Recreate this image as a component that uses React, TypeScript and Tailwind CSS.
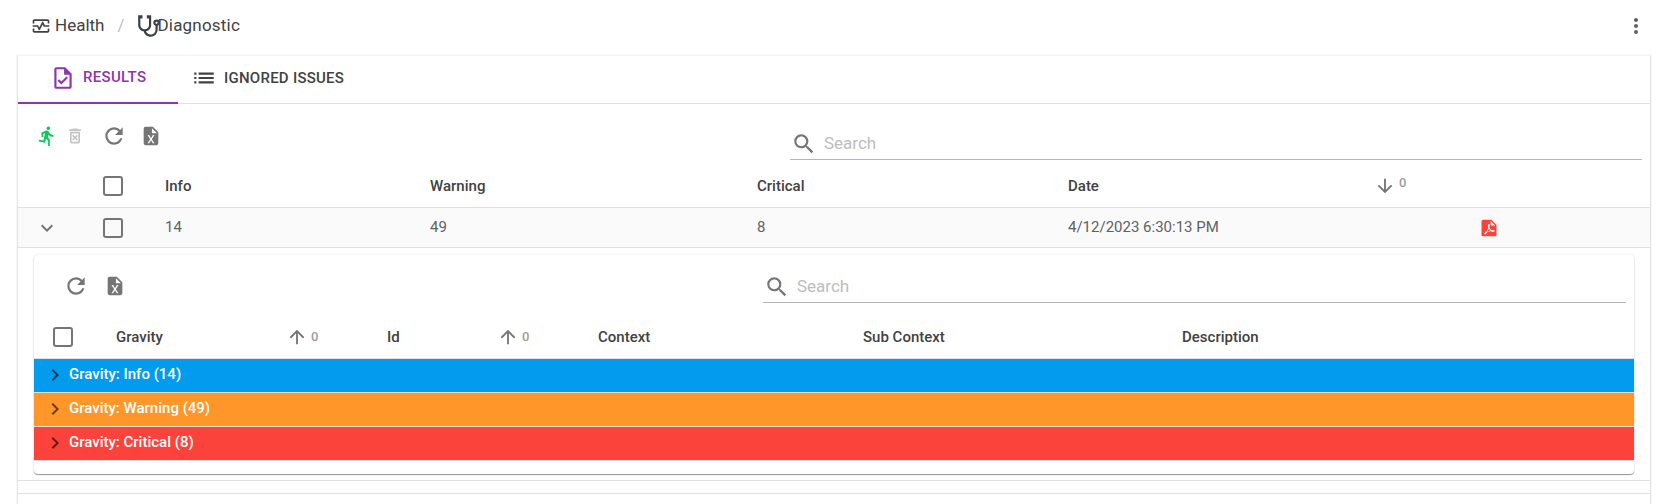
import React from "react";
import { MdOutlineMonitorHeart, MdMoreVert, MdList, MdKeyboardArrowDown, MdKeyboardArrowRight } from "react-icons/md";

const paths = {
    run: "M13.5,5.5C14.59,5.5 15.5,4.58 15.5,3.5C15.5,2.38 14.59,1.5 13.5,1.5C12.39,1.5 11.5,2.38 11.5,3.5C11.5,4.58 12.39,5.5 13.5,5.5M9.89,19.38L10.89,15L13,17V23H15V15.5L12.89,13.5L13.5,10.5C14.79,12 16.79,13 19,13V11C17.09,11 15.5,10 14.69,8.58L13.69,7C13.29,6.38 12.69,6 12,6C11.69,6 11.5,6.08 11.19,6.08L6,8.28V13H8V9.58L9.79,8.88L8.19,17L3.29,16L2.89,18L9.89,19.38Z",
    trash: "M14.12,10.47L12,12.59L9.87,10.47L8.46,11.88L10.59,14L8.47,16.12L9.88,17.54L12,15.41L14.12,17.53L15.53,16.12L13.41,14L15.53,11.88L14.12,10.47M15.5,4L14.5,3H9.5L8.5,4H5V6H19V4H15.5M6,19A2,2 0 0,0 8,21H16A2,2 0 0,0 18,19V7H6V19M8,9H16V19H8V9Z",
    refresh: "M17.65,6.35C16.2,4.9 14.21,4 12,4A8,8 0 0,0 4,12A8,8 0 0,0 12,20C15.73,20 18.84,17.45 19.73,14H17.65C16.83,16.33 14.61,18 12,18A6,6 0 0,1 6,12A6,6 0 0,1 12,6C13.66,6 15.14,6.69 16.22,7.78L13,11H20V4L17.65,6.35Z",
    excel: "M14,2H6A2,2 0 0,0 4,4V20A2,2 0 0,0 6,22H18A2,2 0 0,0 20,20V8L14,2M15.8,20H14L12,16.6L10,20H8.2L11.1,15.5L8.2,11H10L12,14.4L14,11H15.8L12.9,15.5L15.8,20M13,9V3.5L18.5,9H13Z",
    pdf: "M14,9H19.5L14,3.5V9M7,2H15L21,8V20A2,2 0 0,1 19,22H5C3.89,22 3,21.1 3,20V4A2,2 0 0,1 5,2H7M11.93,12.44C12.34,13.34 12.86,14.08 13.46,14.59L13.87,14.91C13,15.07 11.8,15.35 10.53,15.84L10.42,15.88L10.92,14.84C11.37,13.97 11.7,13.18 11.93,12.44M18.41,16.25C18.59,16.07 18.68,15.84 18.69,15.59C18.72,15.39 18.67,15.2 18.57,15.04C18.28,14.57 17.53,14.35 16.29,14.35L15,14.42L14.13,13.84C13.5,13.32 12.93,12.41 12.53,11.28L12.57,11.14C12.9,9.81 13.21,8.2 12.55,7.54C12.39,7.38 12.17,7.3 11.94,7.3H11.7C11.33,7.3 11,7.69 10.91,8.07C10.54,9.4 10.76,10.13 11.13,11.34C10.88,12.23 10.56,13.25 10.05,14.28L9.09,16.08L8.2,16.57C7,17.32 6.43,18.16 6.32,18.69C6.28,18.88 6.3,19.05 6.37,19.23L6.4,19.28L6.88,19.59L7.32,19.7C8.13,19.7 9.05,18.75 10.29,16.63L10.47,16.56C11.5,16.23 12.78,16 14.5,15.81C15.53,16.32 16.74,16.55 17.5,16.55C17.94,16.55 18.24,16.44 18.41,16.25Z",
    stethoscope: "M19,8C19.56,8 20,8.43 20,9A1,1 0 0,1 19,10C18.43,10 18,9.55 18,9C18,8.43 18.43,8 19,8M2,2V11C2,13.96 4.19,16.5 7.14,16.91C7.76,19.92 10.42,22 13.5,22A6.5,6.5 0 0,0 20,15.5V11.81C21.16,11.39 22,10.29 22,9A3,3 0 0,0 19,6A3,3 0 0,0 16,9C16,10.29 16.84,11.4 18,11.81V15.41C18,17.91 16,19.91 13.5,19.91C11.5,19.91 9.82,18.7 9.22,16.9C12,16.3 14,13.8 14,11V2H10V5H12V11A4,4 0 0,1 8,15A4,4 0 0,1 4,11V5H6V2H2Z",
    fileCheck: "M14,2H6A2,2 0 0,0 4,4V20A2,2 0 0,0 6,22H18A2,2 0 0,0 20,20V8L14,2M18,20H6V4H13V9H18V20M10.5,18L7,14.5L8.41,13.09L10.5,15.17L15.09,10.59L16.5,12L10.5,18Z",
    magnify: "M9.5,3A6.5,6.5 0 0,1 16,9.5C16,11.11 15.41,12.59 14.44,13.73L14.71,14H15.5L20.5,19L19,20.5L14,15.5V14.71L13.73,14.44C12.59,15.41 11.11,16 9.5,16A6.5,6.5 0 0,1 3,9.5A6.5,6.5 0 0,1 9.5,3M9.5,5C7,5 5,7 5,9.5C5,12 7,14 9.5,14C12,14 14,12 14,9.5C14,7 12,5 9.5,5Z",
    arrowUp: "M13,20H11V8L5.5,13.5L4.08,12.08L12,4.16L19.92,12.08L18.5,13.5L13,8V20Z",
    arrowDown: "M11,4H13V16L18.5,10.5L19.92,11.92L12,19.84L4.08,11.92L5.5,10.5L11,16V4Z",
};

const Icon = ({ d, className }: { d: string; className: string }) => (
    <svg viewBox="0 0 24 24" fill="currentColor" className={className}>
        <path d={d} />
    </svg>
);

const Check = () => <div className="w-[20px] h-[20px] border-2 border-[#757575] rounded-[3px]" />;

const Search = ({ className }: { className: string }) => (
    <div className={`flex items-center border-b border-[#b5b5b5] ${className}`}>
        <Icon d={paths.magnify} className="w-[26px] h-[26px] text-[#757575] ml-[1px]" />
        <input
            placeholder="Search"
            className="ml-[7px] flex-1 text-[17px] outline-none placeholder:text-[#bdbdbd]"
        />
    </div>
);

const Sort = ({ d, className }: { d: string; className: string }) => (
    <div className={`flex -ml-[2px] ${className}`}>
        <Icon d={d} className="w-[22px] h-[22px] text-[#757575]" />
        <span className="ml-[3px] text-[13px] leading-[14px] text-[#9e9e9e]">0</span>
    </div>
);

const groups = [
    { label: "Gravity: Info (14)", color: "bg-[#039BEE]" },
    { label: "Gravity: Warning (49)", color: "bg-[#FF962A]" },
    { label: "Gravity: Critical (8)", color: "bg-[#FB433B]" },
];

export default function App() {
    return (
        <div className="h-[504px] overflow-hidden bg-white font-['Roboto',sans-serif] text-[15px] text-[#616161]">
            {/* Шапка */}
            <div className="h-[55px] pb-[3px] pl-[31px] pr-[23px] flex items-center text-[17px] text-[#424242]">
                <MdOutlineMonitorHeart className="w-[20px] h-[20px] text-[#424242]" />
                <span className="ml-[4px]">Health</span>
                <span className="ml-[13px] text-[#bdbdbd]">/</span>
                <Icon d={paths.stethoscope} className="ml-[12px] w-[26px] h-[26px] text-[#37404a]" />
                <span className="-ml-[5px] tracking-[0.2px]">Diagnostic</span>
                <MdMoreVert className="ml-auto w-[24px] h-[24px] text-[#616161]" />
            </div>

            <div className="ml-[17px] mr-[20px] h-[449px] border-x border-[#e3e3e3] border-t border-t-[#f5f5f5] shadow-[0_0_2px_rgba(0,0,0,0.08)]">
                {/* Вкладки */}
                <div className="h-[48px] flex border-b border-[#e0e0e0] font-medium">
                    <div className="w-[160px] h-[48px] flex items-center pl-[33px] pb-[3px] border-b-2 border-[#8e35ab] text-[#8e35ab]">
                        <Icon d={paths.fileCheck} className="w-[26px] h-[26px] -ml-[1px]" />
                        <span className="ml-[7px] tracking-[0.3px]">RESULTS</span>
                    </div>
                    <div className="flex items-center pl-[13px] pb-[3px] text-[#424242] tracking-[0.25px]">
                        <MdList className="w-[26px] h-[26px]" />
                        <span className="ml-[7px]">IGNORED ISSUES</span>
                    </div>
                </div>

                {/* Панель инструментов */}
                <div className="h-[58px] flex items-start relative">
                    <div className="flex items-center h-[24px] mt-[20px] pl-[18px]">
                        <Icon d={paths.run} className="w-[22px] h-[22px] text-[#14c45f]" />
                        <Icon d={paths.trash} className="ml-[7px] w-[20px] h-[20px] text-[#c4c4c4]" />
                        <Icon d={paths.refresh} className="ml-[16px] w-[26px] h-[26px] text-[#757575]" />
                        <Icon d={paths.excel} className="ml-[13px] w-[22px] h-[22px] text-[#757575]" />
                    </div>
                    <Search className="absolute left-[772px] right-[8px] top-[26px] h-[30px] pb-[2px]" />
                </div>

                {/* Таблица */}
                <div className="h-[46px] pt-[3px] grid grid-cols-[147px_265px_327px_311px_308px_1fr] items-center border-b border-[#e0e0e0] font-medium text-[#424242]">
                    <div className="pl-[85px]"><Check /></div>
                    <div>Info</div>
                    <div>Warning</div>
                    <div>Critical</div>
                    <div>Date</div>
                    <Sort d={paths.arrowDown} className="items-start [&>span]:mt-[1px]" />
                </div>
                <div className="h-[40px] grid grid-cols-[147px_265px_327px_311px_414px_1fr] items-center border-b border-[#e0e0e0] bg-[#fafafa]">
                    <div className="flex items-center pl-[17px]">
                        <MdKeyboardArrowDown className="w-[24px] h-[24px] text-[#757575]" />
                        <div className="ml-[44px]"><Check /></div>
                    </div>
                    <div>14</div>
                    <div>49</div>
                    <div>8</div>
                    <div>4/12/2023 6:30:13 PM</div>
                    <Icon d={paths.pdf} className="w-[20px] h-[20px] text-[#fb433b] -ml-[3px]" />
                </div>

                {/* Вложенная таблица */}
                <div className="mt-[7px] ml-[16px] mr-[16px] h-[219px] rounded-[4px] bg-white shadow-[0_1px_1px_rgba(0,0,0,0.4),0_0_3px_rgba(0,0,0,0.1)]">
                    <div className="h-[58px] relative">
                        <div className="flex items-center pl-[29px] pt-[18px]">
                            <Icon d={paths.refresh} className="w-[26px] h-[26px] text-[#757575]" />
                            <Icon d={paths.excel} className="ml-[15px] w-[22px] h-[22px] text-[#757575]" />
                        </div>
                        <Search className="absolute left-[729px] right-[8px] top-[16px] h-[32px] pt-[1px]" />
                    </div>
                    <div className="h-[45px] pt-[3px] grid grid-cols-[82px_172px_99px_112px_99px_265px_319px_1fr] items-center font-medium text-[#424242]">
                        <div className="pl-[19px]"><Check /></div>
                        <div>Gravity</div>
                        <Sort d={paths.arrowUp} className="items-center" />
                        <div>Id</div>
                        <Sort d={paths.arrowUp} className="items-center" />
                        <div>Context</div>
                        <div>Sub Context</div>
                        <div>Description</div>
                    </div>
                    <div className="border-t border-[#e0e0e0]">
                        {groups.map((group) => (
                            <div
                                key={group.label}
                                className={`h-[34px] pb-[2px] border-b border-[#e0e0e0] flex items-center font-medium text-white ${group.color}`}
                            >
                                <MdKeyboardArrowRight className="ml-[9px] w-[24px] h-[24px] text-black/60" />
                                <span className="ml-[2px]">{group.label}</span>
                            </div>
                        ))}
                    </div>
                </div>

                <div className="mt-[6px] h-[14px] border-y border-[#e0e0e0]" />
            </div>
        </div>
    );
}
